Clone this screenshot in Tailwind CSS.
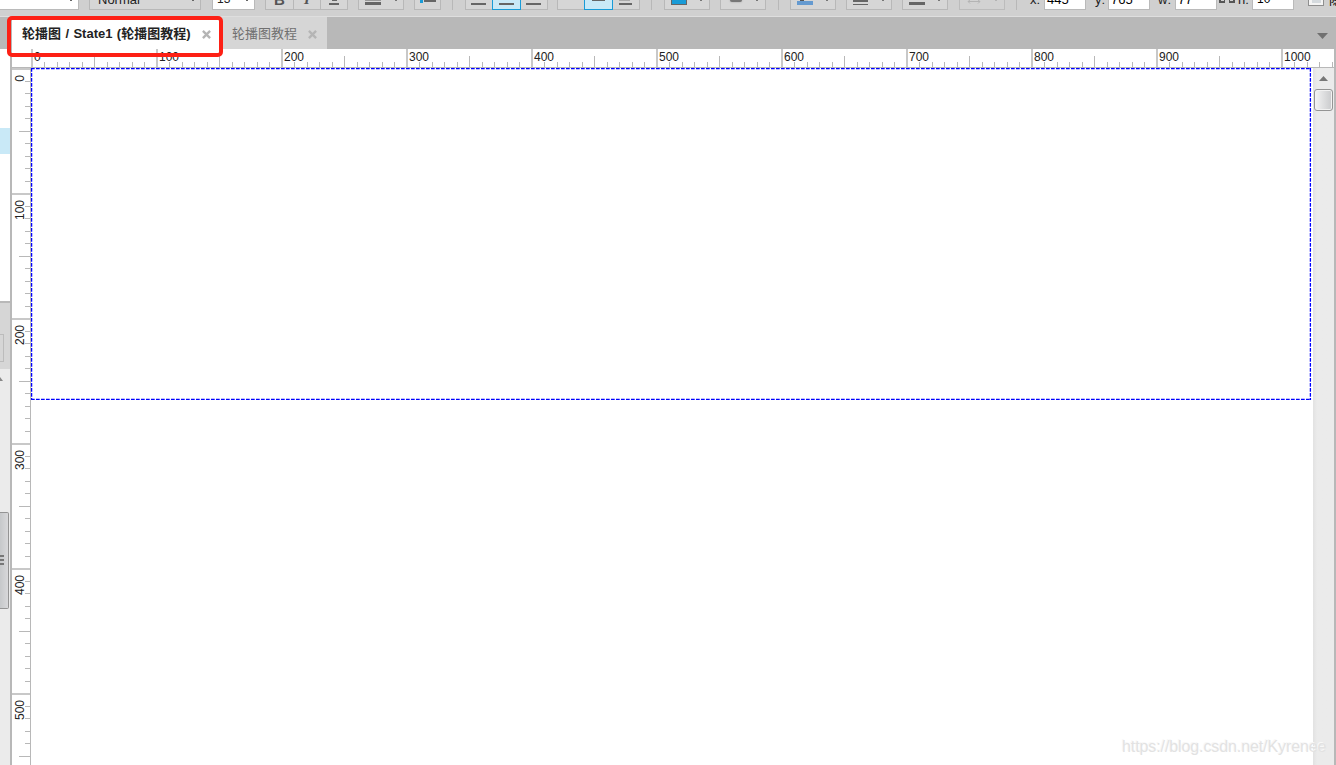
<!DOCTYPE html>
<html lang="zh-CN">
<head>
  <meta charset="UTF-8" />
  <title>轮播图 / State1</title>
  <script src="https://cdn.jsdelivr.net/npm/@tailwindcss/browser@4"></script>
</head>
<body class="bg-white w-[1336px] h-[765px] overflow-hidden flex flex-col relative text-xs text-[#222] font-['Liberation_Sans','Noto_Sans_CJK_SC',sans-serif]">

  <!-- toolbar, scrolled so only its bottom edge shows -->
  <div class="h-[17px] shrink-0 bg-[#d0d0d0] border-b border-[#dedede] overflow-hidden flex items-start text-[13px] *:shrink-0">
    <div class="w-[79px] h-[10px] bg-white border-r border-b border-[#bababa] flex justify-end pr-[6px]"><i class="w-[2px] h-[1px] bg-[#666]"></i></div>
    <div class="ml-[10px] w-[112px] h-[10px] bg-[#d6d6d6] border-x border-b border-[#b8b8b8] flex justify-between pl-[8px] pr-[6px]">
      <span class="leading-[13px] -mt-[7px]">Normal</span><i class="w-[2px] h-[1px] bg-[#666]"></i>
    </div>
    <div class="ml-[11px] w-[43px] h-[10px] bg-white border-x border-b border-[#bababa] flex justify-between pl-[4px] pr-[6px]">
      <span class="text-[12px] leading-[13px] -mt-[7px]">13</span><i class="w-[2px] h-[1px] bg-[#666]"></i>
    </div>
    <div class="ml-[10px] w-[83px] h-[10px] bg-[#d6d6d6] border-x border-b border-[#b8b8b8] flex text-[#555]">
      <b class="w-[27px] text-center text-[15px] leading-[15px] -mt-[8px]">B</b>
      <b class="w-[28px] h-[17px] border-x border-[#b8b8b8] text-center text-[15px] leading-[15px] -mt-[8px] italic font-['Liberation_Serif',serif]">I</b>
      <span class="flex-1 flex flex-col items-center"><i class="w-[5px] h-[1px] bg-[#666]"></i><i class="w-[10px] h-[2px] mt-[2px] bg-[#666]"></i></span>
    </div>
    <div class="ml-[10px] w-[46px] h-[10px] bg-[#d6d6d6] border-x border-b border-[#b8b8b8] flex justify-between pl-[6px] pr-[6px]">
      <span><i class="block w-4 h-[1px] bg-[#999]"></i><i class="block w-4 h-[3px] mt-[1px] bg-[#666]"></i></span><i class="w-[2px] h-[1px] bg-[#777]"></i>
    </div>
    <div class="ml-[10px] w-[27px] h-[10px] bg-[#d6d6d6] border-x border-b border-[#b8b8b8] flex pl-[5px] gap-[1px]">
      <i class="w-[3px] h-[3px] bg-[#199bd7]"></i><i class="w-[12px] h-[2px] bg-[#666]"></i>
    </div>
    <i class="ml-[11px] w-[1px] h-[10px] bg-[#b8b8b8]"></i>

    <div class="ml-[12px] w-[83px] h-[10px] bg-[#d6d6d6] border-x border-b border-[#b8b8b8] flex">
      <span class="w-[26px] pt-[3px] pl-[5px]"><i class="block w-[15px] h-[2px] bg-[#666]"></i></span>
      <span class="w-[29px] h-[10px] shrink-0 bg-[#c9e9f7] border-x border-b border-[#199bd7] pt-[3px] pl-[6px]"><i class="block w-[15px] h-[2px] bg-[#666]"></i></span>
      <span class="pt-[3px] pl-[5px]"><i class="block w-[15px] h-[2px] bg-[#666]"></i></span>
    </div>
    <div class="ml-[9px] w-[83px] h-[10px] bg-[#d6d6d6] border-x border-b border-[#b8b8b8] flex">
      <span class="w-[26px]"></span>
      <span class="w-[29px] h-[10px] shrink-0 bg-[#c9e9f7] border-x border-b border-[#199bd7] pl-[7px]"><i class="block w-[13px] h-[1px] bg-[#666]"></i></span>
      <span class="pl-[6px]"><i class="block w-[11px] h-[1px] bg-[#aaa]"></i><i class="block w-[13px] h-[2px] mt-[2px] bg-[#666]"></i></span>
    </div>
    <i class="ml-[11px] w-[1px] h-[10px] bg-[#b8b8b8]"></i>

    <div class="ml-[12px] w-[46px] h-[10px] bg-[#d6d6d6] border-x border-b border-[#b8b8b8] flex justify-between pl-[6px] pr-[7px]">
      <i class="w-4 h-[5px] bg-[#199bd7] border-x border-b border-[#666]"></i><i class="w-[2px] h-[1px] bg-[#777]"></i>
    </div>
    <div class="ml-[10px] w-[46px] h-[10px] bg-[#d6d6d6] border-x border-b border-[#b8b8b8] flex justify-between pl-[9px] pr-[7px]">
      <i class="w-[12px] h-[2px] rounded-b-sm bg-[#777] shadow-[0_0_2px_#999]"></i><i class="w-[2px] h-[1px] bg-[#777]"></i>
    </div>
    <i class="ml-[12px] w-[1px] h-[10px] bg-[#b8b8b8]"></i>
    <div class="ml-[11px] w-[46px] h-[10px] bg-[#d6d6d6] border-x border-b border-[#b8b8b8] flex justify-between pl-[6px] pr-[7px]">
      <span><i class="block ml-[3px] w-[4px] h-[1px] bg-[#555]"></i><i class="block w-4 h-[4px] bg-[#659ad0]"></i></span><i class="w-[2px] h-[1px] bg-[#777]"></i>
    </div>
    <div class="ml-[10px] w-[46px] h-[10px] bg-[#d6d6d6] border-x border-b border-[#b8b8b8] flex justify-between pl-[6px] pr-[7px]">
      <span><i class="block w-[15px] h-[2px] bg-[#666]"></i><i class="block w-[15px] h-[1px] mt-[2px] bg-[#666]"></i></span><i class="w-[2px] h-[1px] bg-[#777]"></i>
    </div>
    <div class="ml-[10px] w-[46px] h-[10px] bg-[#d6d6d6] border-x border-b border-[#b8b8b8] flex justify-between pl-[6px] pr-[7px]">
      <i class="w-4 h-[3px] mt-[2px] bg-[#666]"></i><i class="w-[2px] h-[1px] bg-[#777]"></i>
    </div>
    <div class="ml-[11px] w-[46px] h-[10px] bg-[#d2d2d2] border-x border-b border-[#bcbcbc] flex justify-between pl-[7px] pr-[7px]">
      <svg class="w-[14px] h-[5px]" viewBox="0 0 14 5" fill="none" stroke="#b4b4b4"><path d="M1 1.5h12M3 0L1 1.5 3 3.5M11 0l2 1.5L11 3.5"/></svg><i class="w-[2px] h-[1px] bg-[#b4b4b4]"></i>
    </div>
    <i class="ml-[11px] w-[1px] h-[10px] bg-[#b8b8b8]"></i>

    <span class="w-[27px] pl-[13px] leading-[13px] -mt-[7px]">x:</span>
    <span class="w-[42px] h-[10px] bg-white border-x border-b border-[#bababa] pl-[2px] text-black"><span class="block leading-[13px] -mt-[7px]">445</span></span>
    <span class="w-[22px] pl-[9px] leading-[13px] -mt-[7px]">y:</span>
    <span class="w-[42px] h-[10px] bg-white border-x border-b border-[#bababa] pl-[2px] text-black"><span class="block leading-[13px] -mt-[7px]">765</span></span>
    <span class="w-[25px] pl-[8px] leading-[13px] -mt-[7px]">w:</span>
    <span class="w-[42px] h-[10px] bg-white border-x border-b border-[#bababa] pl-[2px] text-black"><span class="block leading-[13px] -mt-[7px]">77</span></span>
    <svg class="ml-[2px] w-[16px] h-[4px]" viewBox="0 0 16 4" fill="none" stroke="#555" stroke-width="2"><path d="M1 0v2h5M10 2h5V0M5 0h1M10 0h1"/></svg>
    <span class="w-[17px] pl-[3px] leading-[13px] -mt-[7px]">h:</span>
    <span class="w-[42px] h-[10px] bg-white border-x border-b border-[#bababa] pl-[4px] text-black"><span class="block text-[12px] leading-[13px] -mt-[7px]">10</span></span>
    <span class="ml-[14px] w-[16px] h-[6px] bg-[#f4f4f4] border-x border-b border-[#8f8f8f] flex justify-center"><i class="w-[9px] h-[3px] bg-[#d5dade]"></i></span>
    <span class="ml-[5px] text-black leading-[13px] -mt-[7px]">隐</span>
  </div>

  <!-- page tabs -->
  <div class="h-8 shrink-0 bg-[#b8b8b8] flex items-stretch pl-3 pr-2">
    <div class="w-[208px] bg-white flex items-center pl-[10px]">
      <b class="w-[180px] whitespace-nowrap text-[13px] [word-spacing:0.8px] pt-[2px]">轮播图 / State1 (轮播图教程)</b>
      <svg class="w-[9px] h-[9px] mt-[2px]" viewBox="0 0 10 10" stroke="#b5b5b5" stroke-width="2.6"><path d="M1 1l8 8M9 1l-8 8"/></svg>
    </div>
    <div class="w-[107px] bg-[#d6d6d6] flex items-center pl-[12px]">
      <span class="w-[76px] whitespace-nowrap text-[13px] text-[#707070] pt-[2px]">轮播图教程</span>
      <svg class="w-[9px] h-[9px] mt-[2px]" viewBox="0 0 10 10" stroke="#b5b5b5" stroke-width="2.6"><path d="M1 1l8 8M9 1l-8 8"/></svg>
    </div>
    <svg class="ml-auto mt-4 w-[11px] h-[6px]" viewBox="0 0 11 6"><path d="M0 0h11L5.5 6z" fill="#707070"/></svg>
  </div>

  <div class="flex-1 flex min-h-0">
    <!-- side panels -->
    <div class="w-3 shrink-0 border-r-2 border-[#b8b8b8] flex flex-col overflow-hidden">
      <div class="h-[79px] bg-white"></div>
      <div class="h-[26px] bg-[#c9e9f7]"></div>
      <div class="h-[147px] bg-white"></div>
      <div class="h-[68px] bg-[#d6d6d6] border-t-2 border-[#b8b8b8] pt-[31px]">
        <div class="w-1 h-7 border-r border-y border-[#bcbcbc]"></div>
      </div>
      <div class="flex-1 bg-[#ebebeb] pt-2">
        <svg class="w-[3px] h-[4px]" viewBox="0 0 3 4"><path d="M0 0l3 4H0z" fill="#888"/></svg>
        <div class="mt-[131px] w-[9px] h-[97px] bg-linear-to-r from-[#c6c8ca] to-[#d8d8da] border-r border-y border-[#949494] rounded-r-xs flex flex-col gap-[2px] pt-[42px]">
          <i class="w-1 h-[2px] bg-[#777]"></i><i class="w-1 h-[2px] bg-[#777]"></i><i class="w-1 h-[2px] bg-[#777]"></i>
        </div>
      </div>
    </div>

    <div class="flex-1 flex flex-col">
      <svg id="hRuler" class="h-[19px] w-[1322px] shrink-0" shape-rendering="crispEdges"></svg>
      <div class="flex-1 flex">
        <svg id="vRuler" class="w-[19px] h-[697px] shrink-0" shape-rendering="crispEdges"></svg>
        <svg class="flex-1 h-[697px]" fill="none" stroke="#0000ff" stroke-width="1.3" stroke-dasharray="3.7 1.3">
          <path d="M0 .6H1280M0 331.4H1280"/><path d="M.6 0V332M1279.4 0V332"/>
        </svg>
        <div class="w-[21px] h-[697px] bg-linear-to-r from-[#e2e2e2] via-[#ebebeb] via-20% to-[#ebebeb] flex flex-col items-center">
          <svg class="mt-2 w-[9px] h-[5px]" viewBox="0 0 9 5"><path d="M0 5l4.5-5L9 5z" fill="#777"/></svg>
          <div class="mt-2 w-[19px] h-[22px] bg-linear-to-r from-[#f4f4f4] to-[#c9cacc] border border-[#949494] rounded-[3px] shadow-[inset_0_0_0_1px_#f2f2f2]"></div>
        </div>
      </div>
    </div>
    <div class="w-[2px] shrink-0 bg-[#b8b8b8]"></div>
  </div>

  <!-- highlight around the active tab -->
  <div class="absolute left-[7px] top-[16px] w-[216px] h-[41px] border-4 border-[#fd2015] rounded-[5px]"></div>
  <div class="absolute left-[1122px] top-[737px] text-base leading-5 tracking-[-0.1px] text-[#e2e2e2] whitespace-nowrap [text-shadow:-1px_-1px_0_#f8f8f8]">https://blog.csdn.net/Kyrenee</div>

  <script>
    // 12.5px per 10 units
    let h = '<rect x="18" y="18" width="1304" height="1" fill="#b8b8b8"/><rect x="0" y="18" width="19" height="1" fill="#b8b8b8"/>';
    let v = '<rect x="18" y="0" width="1" height="697" fill="#b8b8b8"/>';

    for (let k = 0; k <= 104; k++) {
      const major = k % 10 === 0;
      const len = major ? 18 : k % 5 === 0 ? 11 : 5;
      const size = major ? 2 : 1;
      const fill = major ? '#c8c8c8' : '#b8b8b8';
      const x = Math.floor(20 + 12.5 * k) - (major ? 1 : 0);
      const y = Math.floor(.5 + 12.5 * k);

      h += `<rect x="${x}" y="${18 - len}" width="${size}" height="${len}" fill="${fill}"/>`;
      if (major) h += `<text x="${x + 3}" y="12" font-size="12" fill="#222">${k * 10}</text>`;

      if (y > 697) continue;
      v += `<rect x="${18 - len}" y="${y}" width="${len}" height="${size}" fill="${fill}"/>`;
      if (major) v += `<text transform="translate(12 ${y + 7}) rotate(-90)" text-anchor="end" font-size="12" fill="#222">${k * 10}</text>`;
    }

    document.getElementById('hRuler').innerHTML = h;
    document.getElementById('vRuler').innerHTML = v;
  </script>
</body>
</html>
